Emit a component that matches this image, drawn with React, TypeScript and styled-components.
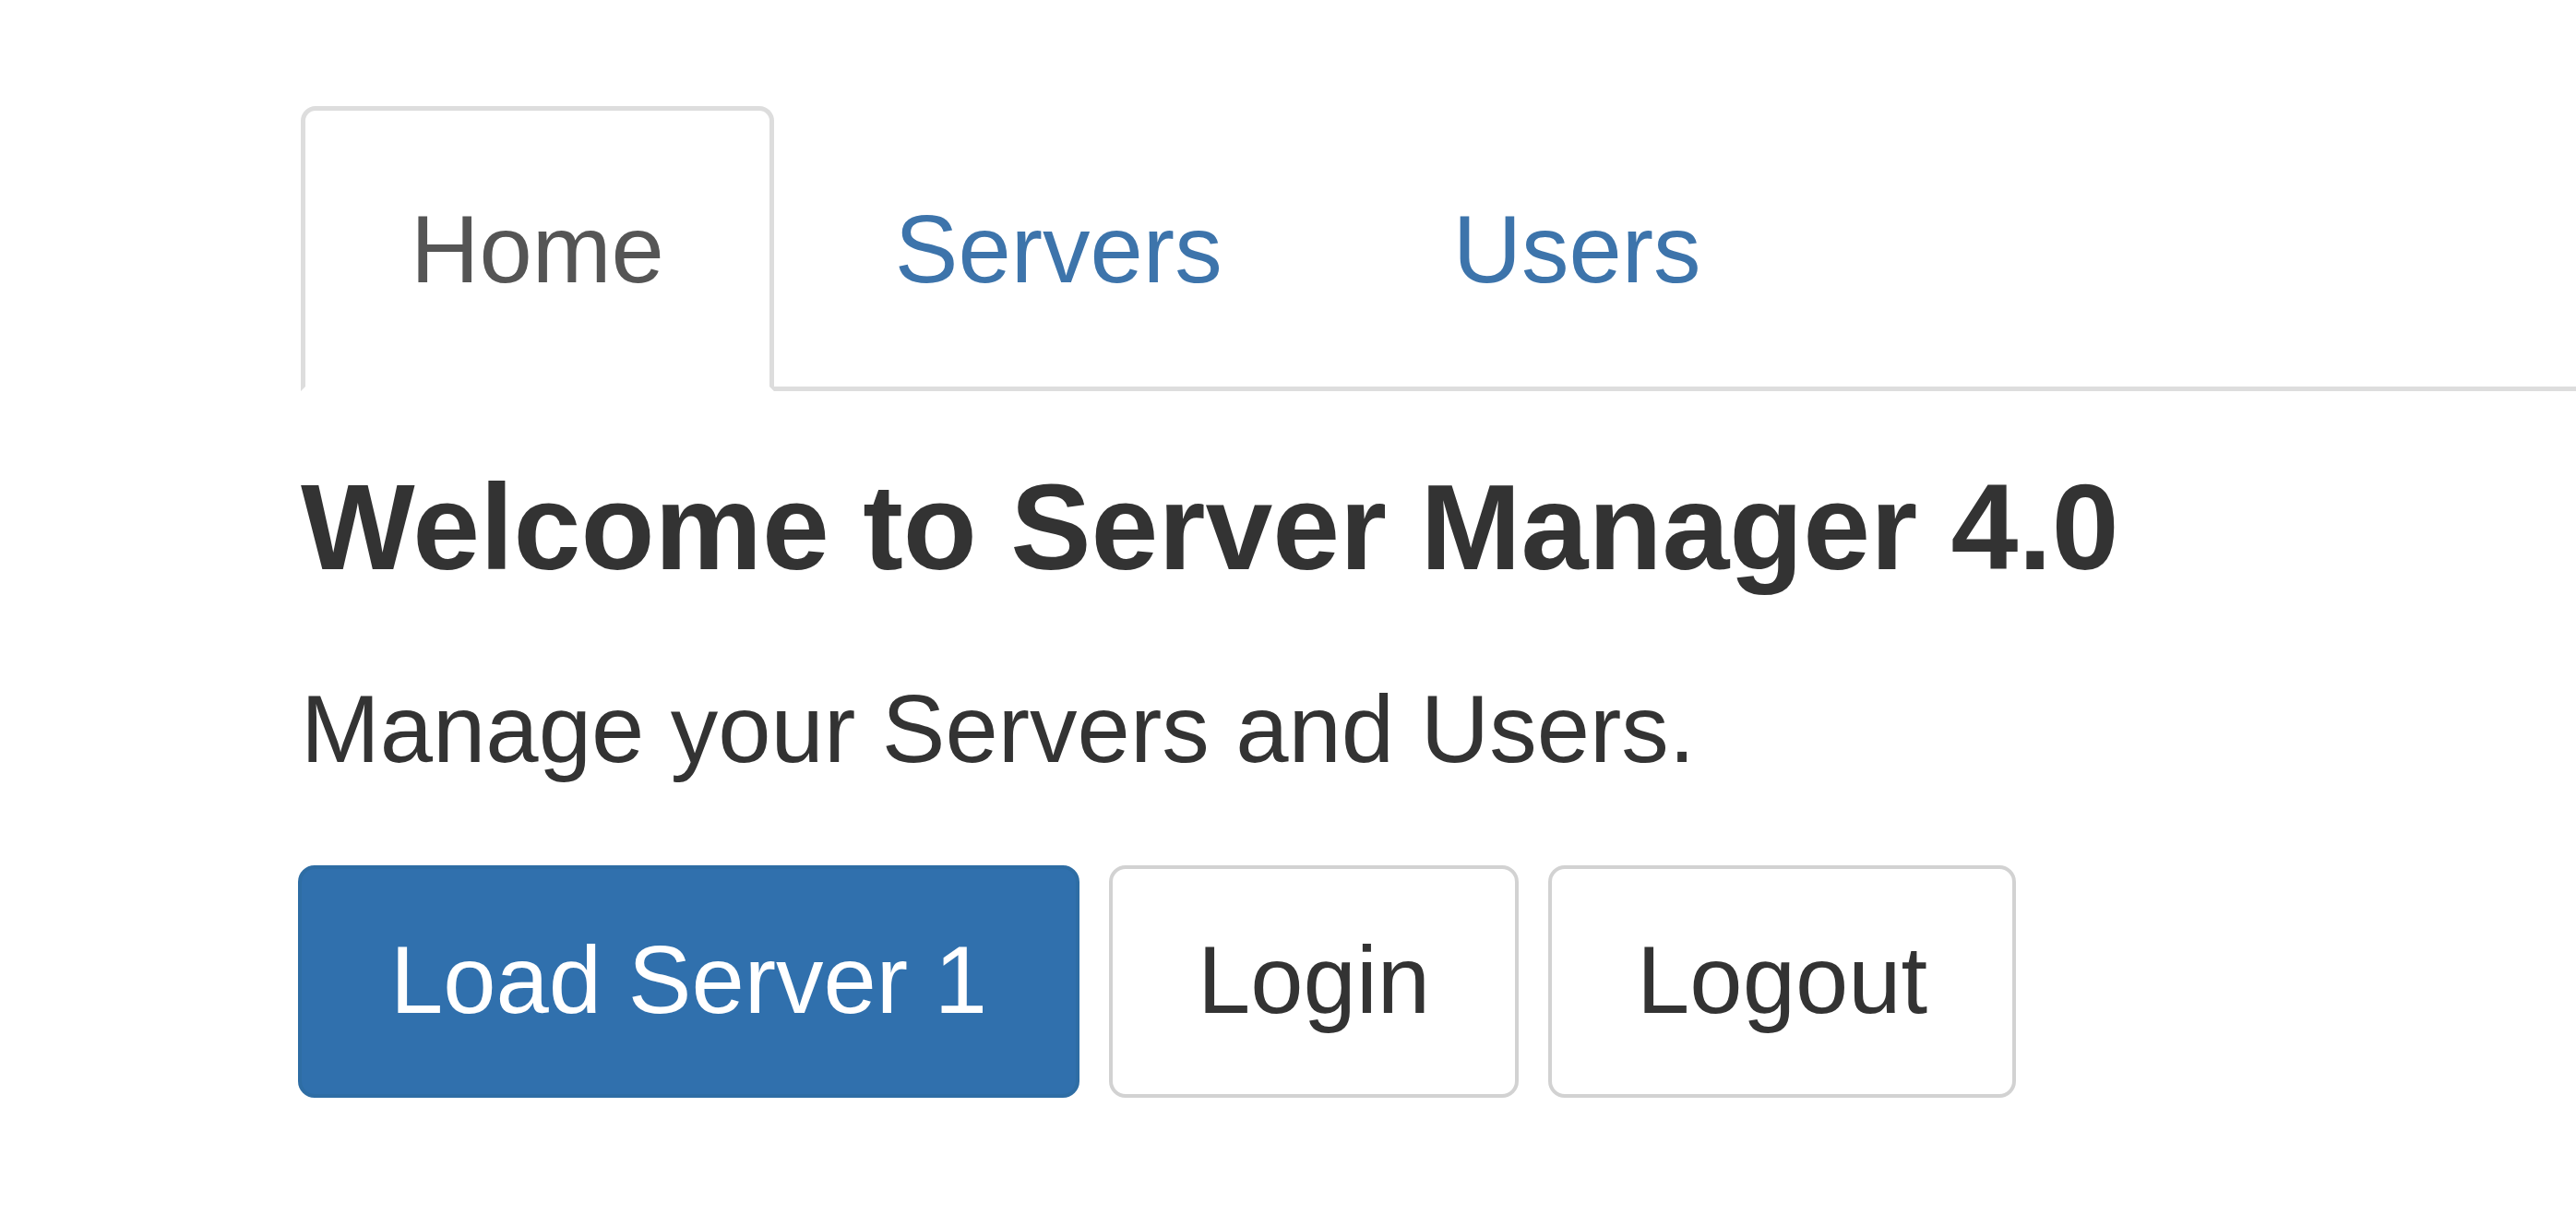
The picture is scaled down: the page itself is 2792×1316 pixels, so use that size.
import React, { useState } from "react";
import styled, { createGlobalStyle } from "styled-components";

const GlobalStyle = createGlobalStyle`
  html, body {
    margin: 0;
    padding: 0;
    background: #ffffff;
  }
  body {
    font-family: "Liberation Sans", Arial, Helvetica, sans-serif;
    color: #333333;
  }
`;

const Page = styled.div`
  padding: 115px 0 0 326px;
`;

const TabBar = styled.ul`
  display: flex;
  margin: 0;
  padding: 0;
  list-style: none;
  border-bottom: 5px solid #dddddd;
`;

const TabItem = styled.li`
  margin-right: 12px;
  margin-bottom: -5px;
`;

const TabLink = styled.a<{ $active?: boolean }>`
  display: block;
  padding: 78px 114px 75px;
  font-size: 103px;
  line-height: 146px;
  text-decoration: none;
  cursor: pointer;
  border: 5px solid transparent;
  border-radius: 16px 16px 0 0;
  color: ${(p) => (p.$active ? "#555555" : "#3d74ab")};
  background: ${(p) => (p.$active ? "#ffffff" : "transparent")};
  ${(p) =>
    p.$active &&
    `
    border-color: #dddddd;
    border-bottom-color: #ffffff;
  `}
`;

const Content = styled.div`
  padding-top: 76px;
`;

const Heading = styled.h4`
  margin: 0;
  font-size: 131px;
  line-height: 144px;
  font-weight: 700;
  color: #333333;
`;

const Lead = styled.p`
  margin: 74px 0 0;
  font-size: 103px;
  line-height: 146px;
  color: #333333;
`;

const ButtonRow = styled.div`
  display: flex;
  gap: 32px;
  margin-top: 74px;
  margin-left: -3px;
`;

const Button = styled.button<{ $primary?: boolean }>`
  font-family: "Liberation Sans", Arial, Helvetica, sans-serif;
  font-size: 103px;
  line-height: 146px;
  padding: 48px ${(p) => (p.$primary ? "96px" : "92px")} 50px;
  border-radius: 18px;
  cursor: pointer;
  border: 4px solid ${(p) => (p.$primary ? "#2e6da4" : "#d2d2d2")};
  background: ${(p) => (p.$primary ? "#3070ad" : "#ffffff")};
  color: ${(p) => (p.$primary ? "#ffffff" : "#333333")};
`;

const tabs = ["Home", "Servers", "Users"];

const App: React.FC = () => {
  const [active, setActive] = useState<string>("Home");

  return (
    <Page>
      <GlobalStyle />
      <TabBar>
        {tabs.map((t) => (
          <TabItem key={t}>
            <TabLink $active={active === t} onClick={() => setActive(t)}>
              {t}
            </TabLink>
          </TabItem>
        ))}
      </TabBar>
      <Content>
        <Heading>Welcome to Server Manager 4.0</Heading>
        <Lead>Manage your Servers and Users.</Lead>
        <ButtonRow>
          <Button $primary>Load Server 1</Button>
          <Button>Login</Button>
          <Button>Logout</Button>
        </ButtonRow>
      </Content>
    </Page>
  );
};

export default App;
